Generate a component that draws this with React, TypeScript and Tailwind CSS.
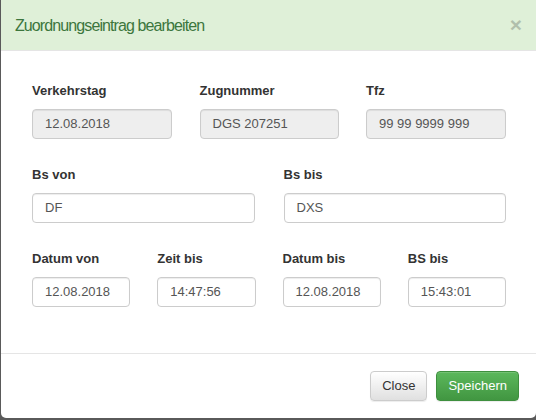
import React from "react";

const font = { fontFamily: '"Liberation Sans", Arial, Helvetica, sans-serif' };

function Field({ label, value, disabled }: { label: string; value: string; disabled?: boolean }) {
  return (
    <div className="flex flex-col min-w-0">
      <label className="text-[13px] leading-[19px] font-bold text-[#333] mb-[9px]">{label}</label>
      <div
        className={
          "h-[30px] rounded-[4px] border border-[#ccc] px-[12px] flex items-center text-[13px] text-[#555] shadow-[inset_0_1px_1px_rgba(0,0,0,0.075)] " +
          (disabled ? "bg-[#eee]" : "bg-white")
        }
      >
        {value}
      </div>
    </div>
  );
}

export default function App() {
  return (
    <div className="w-[536px] h-[420px] bg-[#5a5a5a] flex flex-col" style={font}>
      <div className="ml-[1px] w-[535px] h-[418px] bg-white rounded-b-[5px] flex flex-col overflow-hidden">
        <div className="h-[51px] bg-[#dff0d8] border-b border-[#e5e5e5] flex items-start justify-between pl-[14px] pr-[14px] pt-[15px]">
          <h4 className="text-[16px] tracking-[-0.9px] leading-[22.86px] text-[#3c763d] m-0">Zuordnungseintrag bearbeiten</h4>
          <span className="text-[21px] leading-[21px] font-bold text-black opacity-20 -mt-[1px]">×</span>
        </div>
        <div className="pl-[31px] pr-[30px] pt-[30px] flex flex-col">
          <div className="grid grid-cols-[140px_139px_140px] justify-between">
            <Field label="Verkehrstag" value="12.08.2018" disabled />
            <Field label="Zugnummer" value="DGS 207251" disabled />
            <Field label="Tfz" value="99 99 9999 999" disabled />
          </div>
          <div className="grid grid-cols-2 gap-[29px] mt-[26px]">
            <Field label="Bs von" value="DF" />
            <Field label="Bs bis" value="DXS" />
          </div>
          <div className="grid grid-cols-4 gap-[27px] mt-[26px]">
            <Field label="Datum von" value="12.08.2018" />
            <Field label="Zeit bis" value="14:47:56" />
            <Field label="Datum bis" value="12.08.2018" />
            <Field label="BS bis" value="15:43:01" />
          </div>
        </div>
        <div className="mt-[46px] border-t border-[#e5e5e5] pt-[17px] pr-[17px] flex justify-end gap-[9px]">
          <button className="h-[30px] px-[11px] rounded-[4px] border border-[#ccc] bg-gradient-to-b from-white to-[#e0e0e0] text-[13px] text-[#333] shadow-[inset_0_1px_0_rgba(255,255,255,0.15),0_1px_1px_rgba(0,0,0,0.075)]">
            Close
          </button>
          <button className="h-[30px] px-[11px] rounded-[4px] border border-[#3e8f3e] bg-gradient-to-b from-[#5cb85c] to-[#419641] text-[13px] text-white shadow-[inset_0_1px_0_rgba(255,255,255,0.15),0_1px_1px_rgba(0,0,0,0.075)]">
            Speichern
          </button>
        </div>
      </div>
    </div>
  );
}
